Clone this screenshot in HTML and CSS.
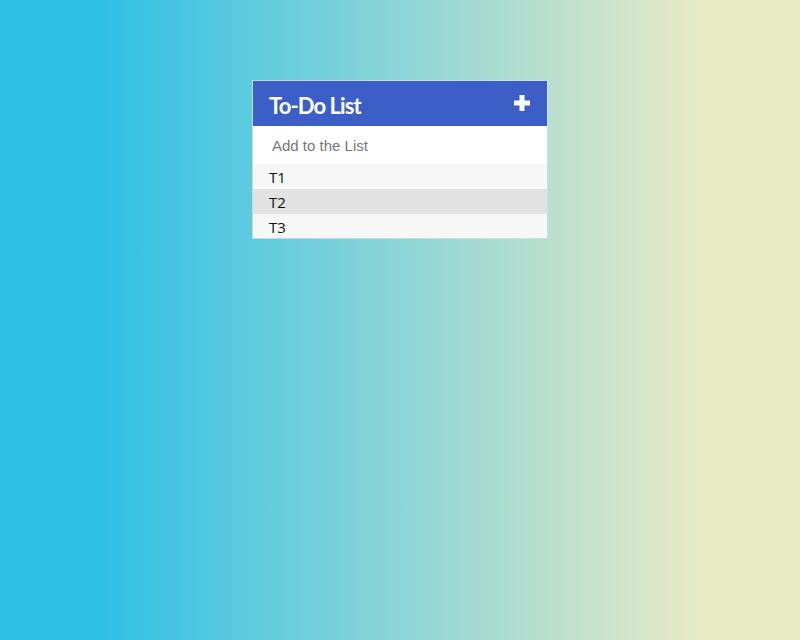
FILE: index.html
```html
<!DOCTYPE html>
<html>
<head>
<meta charset="utf-8">
<link rel="stylesheet" href="styles.css">
</head>
<body>
<div class="card">
  <div class="header">
    <h1 class="title">To-Do List</h1>
    <svg class="plus" width="16" height="16" viewBox="0 0 16 16"><path d="M5.5 0h5v5.5h5.5v5h-5.5v5.5h-5v-5.5h-5.5v-5h5.5z" fill="#fff"/></svg>
  </div>
  <input class="add" type="text" placeholder="Add to the List">
  <ul class="list">
    <li class="item">T1</li>
    <li class="item hover">T2</li>
    <li class="item">T3</li>
  </ul>
</div>
</body>
</html>
```
FILE: styles.css
```css
html, body { margin: 0; height: 100%; }
body {
  background: linear-gradient(to right, #2ec0e6 12%, #e9eac6 88%);
  padding-top: 81px;
  box-sizing: border-box;
}
.card {
  width: 294px;
  margin: 0 auto;
  background: #f7f7f7;
  box-shadow: 0 0 0 1px rgba(220,220,220,0.8);
}
.header {
  height: 45px;
  background: #3b5fc6;
  display: flex;
  align-items: center;
  justify-content: space-between;
  padding: 0 17px 0 16px;
}
.title {
  margin: 3px 0 0;
  font-family: Lato, sans-serif;
  font-weight: 700;
  font-size: 22px;
  color: #fff;
  letter-spacing: -0.9px;
}
.plus { margin-bottom: 2px; }
.add {
  display: block;
  width: 100%;
  box-sizing: border-box;
  height: 38px;
  border: 0;
  margin: 0;
  padding: 0 0 0 19px;
  font-family: "Liberation Sans", Arial, sans-serif;
  font-size: 15px;
  background: #fff;
  outline: none;
}
.add::placeholder { color: #777; }
.list { list-style: none; margin: 0; padding: 0; }
.item {
  height: 25px;
  line-height: 27px;
  padding-left: 16px;
  font-family: "Open Sans", sans-serif;
  font-size: 15px;
  color: #111;
  background: #f7f7f7;
}
.item.hover { background: #e2e2e2; }
.item:last-child { height: 24px; }
```
